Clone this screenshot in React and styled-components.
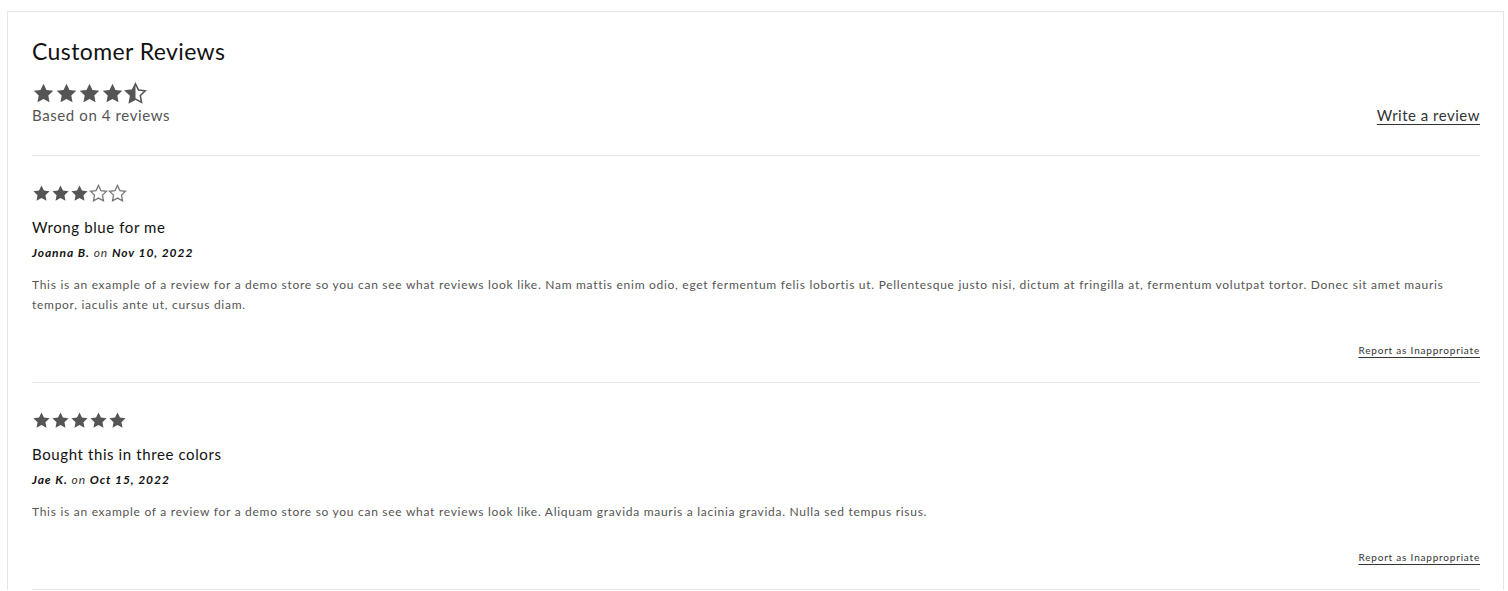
import React from "react";
import styled, { createGlobalStyle } from "styled-components";

const GlobalStyle = createGlobalStyle`
  html, body {
    margin: 0;
    padding: 0;
    background: #ffffff;
  }
  body {
    font-family: Lato, "Noto Sans", "Liberation Sans", sans-serif;
    color: #121212;
  }
`;

const Page = styled.div`
  padding: 11px 4px 0 7px;
`;

const Widget = styled.section`
  border: 1px solid #e6e6e6;
  border-bottom: none;
  padding: 24px 23px 0 24px;
`;

const Title = styled.h2`
  margin: 0;
  font-size: 23px;
  font-weight: 400;
  line-height: 30px;
  letter-spacing: 0.4px;
  color: #121212;
`;

const Summary = styled.div`
  display: flex;
  align-items: flex-end;
  justify-content: space-between;
  padding: 16px 0 30px;
  border-bottom: 1px solid #e6e6e6;
`;

const SummaryLeft = styled.div`
  display: flex;
  flex-direction: column;
`;

const Stars = styled.div`
  display: flex;
  color: #555555;
  line-height: 0;
`;

const Based = styled.span`
  font-size: 15px;
  line-height: 20px;
  letter-spacing: 0.6px;
  color: #555555;
`;

const WriteLink = styled.a`
  font-size: 15px;
  line-height: 20px;
  letter-spacing: 0.5px;
  color: #333333;
  text-decoration: underline;
  text-underline-offset: 3px;
  text-decoration-thickness: 1px;
  cursor: pointer;
`;

const Review = styled.article`
  padding: 28px 0 25px;
  border-bottom: 1px solid #e6e6e6;
  display: flex;
  flex-direction: column;
`;

const ReviewTitle = styled.h3`
  margin: 14px 0 0;
  font-size: 15px;
  font-weight: 400;
  line-height: 20px;
  letter-spacing: 0.6px;
  color: #121212;
`;

const Byline = styled.div`
  margin-top: 8px;
  font-size: 12px;
  line-height: 16px;
  letter-spacing: 0.95px;
  font-style: italic;
  color: #333333;
  b {
    font-weight: 700;
    color: #121212;
  }
`;

const Body = styled.p`
  margin: 14px 0 0;
  font-size: 12px;
  line-height: 20px;
  letter-spacing: 0.72px;
  color: #555555;
`;

const Actions = styled.div`
  display: flex;
  justify-content: flex-end;
  margin-top: 28px;
`;

const ReportLink = styled.a`
  font-size: 10px;
  line-height: 14px;
  letter-spacing: 0.8px;
  color: #333333;
  text-decoration: underline;
  text-underline-offset: 3px;
  cursor: pointer;
`;

const STAR =
  "M12 1.8l3.1 6.5 7.1.9-5.2 4.9 1.3 7.1L12 17.8l-6.3 3.4 1.3-7.1L1.8 9.2l7.1-.9z";

function Star({ size, fill }) {
  const id = `half-${size}`;
  return (
    <svg width={size} height={size} viewBox="0 0 24 24">
      {fill === "half" && (
        <defs>
          <clipPath id={id}>
            <rect x="0" y="0" width="12" height="24" />
          </clipPath>
        </defs>
      )}
      {fill === "full" ? (
        <path d={STAR} fill="currentColor" />
      ) : (
        <>
          <path
            d={STAR}
            fill="none"
            stroke={fill === "half" ? "currentColor" : "#777777"}
            strokeWidth="1.6"
            strokeLinejoin="miter"
          />
          {fill === "half" && (
            <path d={STAR} fill="currentColor" clipPath={`url(#${id})`} />
          )}
        </>
      )}
    </svg>
  );
}

function Rating({ value, size }) {
  const list = [1, 2, 3, 4, 5].map((n) =>
    value >= n ? "full" : value >= n - 0.5 ? "half" : "empty"
  );
  return (
    <Stars>
      {list.map((f, i) => (
        <Star key={i} size={size} fill={f} />
      ))}
    </Stars>
  );
}

const reviews = [
  {
    rating: 3,
    title: "Wrong blue for me",
    author: "Joanna B.",
    date: "Nov 10, 2022",
    body:
      "This is an example of a review for a demo store so you can see what reviews look like. Nam mattis enim odio, eget fermentum felis lobortis ut. Pellentesque justo nisi, dictum at fringilla at, fermentum volutpat tortor. Donec sit amet mauris tempor, iaculis ante ut, cursus diam.",
  },
  {
    rating: 5,
    title: "Bought this in three colors",
    author: "Jae K.",
    date: "Oct 15, 2022",
    body:
      "This is an example of a review for a demo store so you can see what reviews look like. Aliquam gravida mauris a lacinia gravida. Nulla sed tempus risus.",
  },
];

export default function App() {
  return (
    <Page>
      <GlobalStyle />
      <Widget>
        <Title>Customer Reviews</Title>
        <Summary>
          <SummaryLeft>
            <Rating value={4.5} size={23} />
            <Based>Based on 4 reviews</Based>
          </SummaryLeft>
          <WriteLink>Write a review</WriteLink>
        </Summary>
        {reviews.map((r) => (
          <Review key={r.title}>
            <Rating value={r.rating} size={19} />
            <ReviewTitle>{r.title}</ReviewTitle>
            <Byline>
              <b>{r.author}</b> on <b>{r.date}</b>
            </Byline>
            <Body>{r.body}</Body>
            <Actions>
              <ReportLink>Report as Inappropriate</ReportLink>
            </Actions>
          </Review>
        ))}
      </Widget>
    </Page>
  );
}
